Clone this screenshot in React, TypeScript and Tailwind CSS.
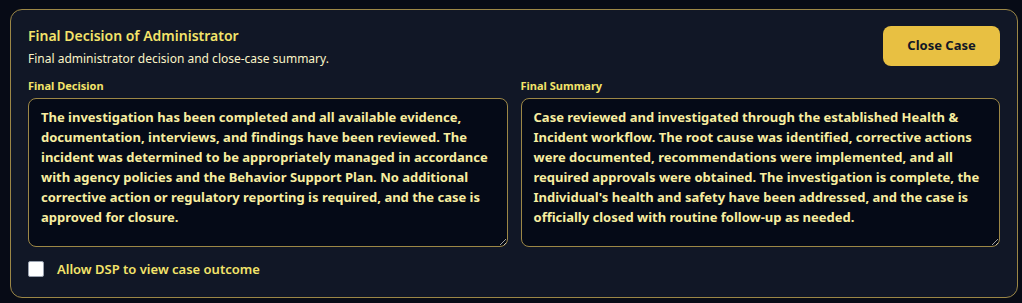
export default function App() {
  const decision =
    'The investigation has been completed and all available evidence, documentation, interviews, and findings have been reviewed. The incident was determined to be appropriately managed in accordance with agency policies and the Behavior Support Plan. No additional corrective action or regulatory reporting is required, and the case is approved for closure.';
  const summary =
    "Case reviewed and investigated through the established Health & Incident workflow. The root cause was identified, corrective actions were documented, recommendations were implemented, and all required approvals were obtained. The investigation is complete, the Individual's health and safety have been addressed, and the case is officially closed with routine follow-up as needed.";

  return (
    <div
      className="min-h-[303px] bg-[#070b16] pl-[10px] pr-[4px] pt-[9px] pb-[6px]"
      style={{ fontFamily: '"Noto Sans", "Open Sans", Arial, sans-serif' }}
    >
      <div className="rounded-xl border border-[#9c8746] bg-[#111726] px-[17px] pt-[16px] pb-[20px]">
        <div className="flex items-start justify-between">
          <div>
            <h2 className="text-[14px] leading-[20px] font-semibold text-[#f4e46a]">Final Decision of Administrator</h2>
            <p className="mt-[5px] text-[12px] leading-[16px] text-[#fbf4c6]">
              Final administrator decision and close-case summary.
            </p>
          </div>
          <button className="h-[40px] w-[117px] rounded-lg bg-[#e8c042] text-[13px] font-bold text-[#111726]">
            Close Case
          </button>
        </div>

        <div className="mt-[12px] grid grid-cols-2 gap-[13px]">
          <div className="flex flex-col">
            <label className="text-[11px] leading-[14px] font-bold text-[#f4e46a]">Final Decision</label>
            <textarea
              defaultValue={decision}
              className="mt-[5px] h-[149px] w-full resize-y rounded-lg border border-[#9c8746] bg-[#050a17] px-[12px] py-[8px] text-[13px] leading-[20px] font-bold text-[#f8eea0] outline-none"
            />
          </div>
          <div className="flex flex-col">
            <label className="text-[11px] leading-[14px] font-bold text-[#f4e46a]">Final Summary</label>
            <textarea
              defaultValue={summary}
              className="mt-[5px] h-[149px] w-full resize-y rounded-lg border border-[#9c8746] bg-[#050a17] px-[12px] py-[8px] text-[13px] leading-[20px] font-bold text-[#f8eea0] outline-none"
            />
          </div>
        </div>

        <label className="mt-[14px] flex items-center gap-[13px]">
          <input type="checkbox" className="h-[16px] w-[16px] appearance-none rounded-[2px] border border-gray-400 bg-white" />
          <span className="text-[13px] leading-[16px] font-semibold text-[#f4e46a]">Allow DSP to view case outcome</span>
        </label>
      </div>
    </div>
  );
}
